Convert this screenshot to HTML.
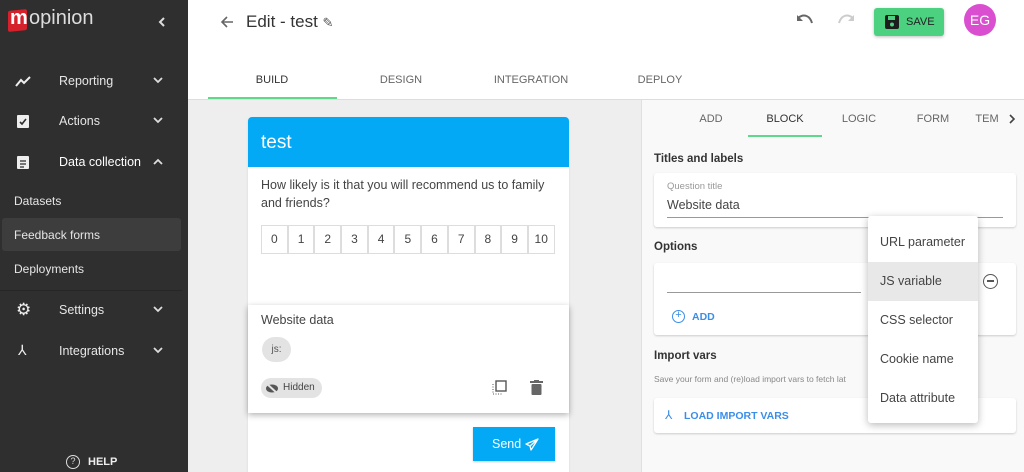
<!DOCTYPE html>
<html><head><meta charset="utf-8"><style>
*{box-sizing:border-box;margin:0;padding:0}
html,body{width:1024px;height:472px;overflow:hidden}
body{font-family:"Liberation Sans",sans-serif;background:#eee;position:relative;color:#333}
.abs{position:absolute}
#side{left:0;top:0;width:188px;height:472px;background:#2f2f2f;color:#eee}
.nav{position:absolute;left:0;width:188px;font-size:12.5px;color:#e6e6e6}
.nav .t{position:absolute;left:59px;top:0}
.nav .ch{position:absolute;left:153px;top:3px}
.sub{position:absolute;left:14px;font-size:12px;color:#e6e6e6}
#hdr{left:188px;top:0;width:836px;height:100px;background:#fff;border-bottom:1px solid #ddd}
.tab{position:absolute;font-size:11px;color:#666;transform:translateX(-50%)}
#rp{left:641px;top:100px;width:383px;height:372px;background:#f9f9f9;border-left:1px solid #e0e0e0}
.card{position:absolute;background:#fff;border-radius:3px;box-shadow:0 1px 2px rgba(0,0,0,.18)}
.lbl{position:absolute;font-size:11.5px;color:#333;font-weight:bold;left:654px}
.cell{float:left;width:26.7px;height:29px;border:1px solid #ddd;text-align:center;line-height:27px;font-size:12px;color:#444}
.dd div{height:39px;line-height:39px;padding-left:12px;font-size:12.5px;color:#444}
</style></head><body>
<div id="side" class="abs">
  <div class="abs" style="left:8px;top:10px;width:19px;height:21px;background:#d4212b;transform:skewY(-6deg);border-radius:2px"></div>
  <div class="abs" style="left:10px;top:7px;font-size:20px;color:#fff;font-weight:bold">m</div>
  <div class="abs" style="left:29px;top:7px;font-size:20px;color:#ddd">opinion</div>
  <svg class="abs" style="left:158px;top:17px" width="8" height="10"><path d="M6 1 L2 5 L6 9" stroke="#ddd" stroke-width="2" fill="none"/></svg>
  <div class="nav" style="top:74px"><svg class="abs" style="left:15px;top:0" width="16" height="14" viewBox="0 0 16 14"><path d="M1 12 L6 6 L9 9 L15 3" stroke="#eee" stroke-width="2" fill="none"/></svg><span class="t">Reporting</span><svg class="ch" width="10" height="7"><path d="M1 1 L5 5 L9 1" stroke="#ddd" stroke-width="1.8" fill="none"/></svg></div>
  <div class="nav" style="top:114px"><svg class="abs" style="left:16px;top:-1px" width="14" height="16"><rect x="1" y="2" width="12" height="13" rx="1" fill="#eee"/><path d="M4 9 L6 11 L10 6" stroke="#2f2f2f" stroke-width="1.6" fill="none"/></svg><span class="t">Actions</span><svg class="ch" width="10" height="7"><path d="M1 1 L5 5 L9 1" stroke="#ddd" stroke-width="1.8" fill="none"/></svg></div>
  <div class="nav" style="top:155px"><svg class="abs" style="left:16px;top:-1px" width="14" height="16"><rect x="1" y="2" width="12" height="13" rx="1" fill="#eee"/><path d="M4 7h6M4 10h6M4 13h4" stroke="#2f2f2f" stroke-width="1.3"/></svg><span class="t" style="color:#fff">Data collection</span><svg class="ch" width="10" height="7"><path d="M1 6 L5 2 L9 6" stroke="#ddd" stroke-width="1.8" fill="none"/></svg></div>
  <div class="sub" style="top:194px">Datasets</div>
  <div class="abs" style="left:2px;top:218px;width:179px;height:33px;background:#3d3d3d;border-radius:3px"></div>
  <div class="sub" style="top:228px">Feedback forms</div>
  <div class="sub" style="top:262px">Deployments</div>
  <div class="abs" style="left:0;top:290px;width:182px;height:1px;background:#262626"></div>
  <div class="nav" style="top:303px"><span class="abs" style="left:16px;top:-3px;font-size:17px;color:#eee">⚙</span><span class="t">Settings</span><svg class="ch" width="10" height="7"><path d="M1 1 L5 5 L9 1" stroke="#ddd" stroke-width="1.8" fill="none"/></svg></div>
  <div class="nav" style="top:344px"><span class="abs" style="left:18px;top:-2px;font-size:14px;color:#eee">⅄</span><span class="t">Integrations</span><svg class="ch" width="10" height="7"><path d="M1 1 L5 5 L9 1" stroke="#ddd" stroke-width="1.8" fill="none"/></svg></div>
  <div class="abs" style="left:66px;top:455px;width:14px;height:14px;border:1.5px solid #ddd;border-radius:50%;font-size:9px;text-align:center;line-height:11px;color:#ddd">?</div>
  <div class="abs" style="left:88px;top:456px;font-size:11px;font-weight:bold;color:#eee">HELP</div>
</div>
<div id="hdr" class="abs">
  <svg class="abs" style="left:32px;top:15px" width="14" height="14"><path d="M13 7H2M7 2 L2 7 L7 12" stroke="#666" stroke-width="1.6" fill="none"/></svg>
  <div class="abs" style="left:58px;top:12px;font-size:17px;color:#333">Edit - test <span style="font-size:13px;color:#555">✎</span></div>
  <div class="tab" style="left:84px;top:74px;color:#333">BUILD</div>
  <div class="abs" style="left:20px;top:97px;width:129px;height:2px;background:#5fd88a"></div>
  <div class="tab" style="left:213px;top:74px">DESIGN</div>
  <div class="tab" style="left:343px;top:74px">INTEGRATION</div>
  <div class="tab" style="left:472px;top:74px">DEPLOY</div>
  <svg class="abs" style="left:608px;top:14px" width="18" height="12"><path d="M2 4 C8 -1 14 2 16 9" stroke="#666" stroke-width="2" fill="none"/><path d="M1 1 V7 H7 Z" fill="#666"/></svg>
  <svg class="abs" style="left:649px;top:14px" width="18" height="12"><path d="M16 4 C10 -1 4 2 2 9" stroke="#ccc" stroke-width="2" fill="none"/><path d="M17 1 V7 H11 Z" fill="#ccc"/></svg>
  <div class="abs" style="left:686px;top:8px;width:70px;height:28px;background:#4cd181;border-radius:3px;box-shadow:0 1px 3px rgba(0,0,0,.25)">
    <svg class="abs" style="left:11px;top:7px" width="14" height="14"><rect x="0" y="0" width="14" height="14" rx="2" fill="#1d1d1d"/><rect x="3" y="1" width="7" height="4" fill="#4cd181"/><circle cx="7" cy="9.5" r="2" fill="#4cd181"/></svg>
    <span class="abs" style="left:32px;top:8px;font-size:11px;color:#222">SAVE</span></div>
  <div class="abs" style="left:776px;top:4px;width:32px;height:32px;border-radius:50%;background:#d94fd0;color:#fff;font-size:14px;text-align:center;line-height:32px">EG</div>
</div>
<div class="abs" style="left:248px;top:117px;width:321px;height:360px;background:#fff;border-radius:4px 4px 0 0;box-shadow:0 1px 2px rgba(0,0,0,.1)">
  <div style="height:50px;background:#03a9f4;border-radius:4px 4px 0 0;color:#fff;font-size:19px;padding:15px 13px">test</div>
  <div class="abs" style="left:13px;top:59px;font-size:12.5px;line-height:18px;color:#444;width:300px">How likely is it that you will recommend us to family and friends?</div>
  <div class="abs" style="left:13px;top:108px;width:294px">
    <div class="cell">0</div><div class="cell">1</div><div class="cell">2</div><div class="cell">3</div><div class="cell">4</div><div class="cell">5</div><div class="cell">6</div><div class="cell">7</div><div class="cell">8</div><div class="cell">9</div><div class="cell">10</div>
  </div>
  <div class="abs" style="left:225px;top:310px;width:82px;height:34px;background:#03a9f4;color:#fff;font-size:12.5px;line-height:34px;padding-left:19px;box-shadow:0 1px 2px rgba(0,0,0,.2)">Send
    <svg class="abs" style="left:52px;top:11px" width="14" height="13"><path d="M13 1 L1 6 L5 8 L6 12 L8 9 Z M5 8 L13 1" stroke="#fff" stroke-width="1.3" fill="none" stroke-linejoin="round"/></svg></div>
</div>
<div class="abs" style="left:248px;top:305px;width:321px;height:108px;background:#fff;box-shadow:0 2px 6px rgba(0,0,0,.3)">
  <div class="abs" style="left:13px;top:8px;font-size:12.5px;color:#444">Website data</div>
  <div class="abs" style="left:14px;top:32px;width:29px;height:25px;border-radius:13px;background:#e3e3e3;font-size:10px;text-align:center;line-height:25px;color:#555">js:</div>
  <div class="abs" style="left:13px;top:73px;width:61px;height:20px;border-radius:10px;background:#e3e3e3;font-size:10px;line-height:20px;color:#444;padding-left:22px">Hidden</div>
  <svg class="abs" style="left:17px;top:78px" width="14" height="11"><ellipse cx="7" cy="5.5" rx="6" ry="4" fill="#555"/><path d="M1 0 L13 11" stroke="#e3e3e3" stroke-width="2"/></svg>
  <svg class="abs" style="left:244px;top:75px" width="15" height="15"><rect x="4" y="1" width="10" height="10" fill="none" stroke="#555" stroke-width="1.4"/><path d="M1 4v10h10" stroke="#555" stroke-dasharray="1 1.5" fill="none"/></svg>
  <svg class="abs" style="left:282px;top:75px" width="13" height="15"><rect x="0" y="1" width="13" height="2" fill="#666"/><rect x="4" y="0" width="5" height="2" fill="#666"/><rect x="1.5" y="4" width="10" height="11" rx="1" fill="#666"/></svg>
</div>
<div id="rp" class="abs"></div>
<div class="tab" style="left:711px;top:113px">ADD</div>
<div class="tab" style="left:785px;top:113px;color:#333">BLOCK</div>
<div class="abs" style="left:748px;top:135px;width:74px;height:2px;background:#5fd88a"></div>
<div class="tab" style="left:859px;top:113px">LOGIC</div>
<div class="tab" style="left:933px;top:113px">FORM</div>
<div class="tab" style="left:987px;top:113px">TEM</div>
<div class="abs" style="left:1000px;top:103px;width:24px;height:32px;background:#f9f9f9"></div>
<svg class="abs" style="left:1009px;top:114px" width="7" height="10"><path d="M1 1 L5 5 L1 9" stroke="#444" stroke-width="1.6" fill="none"/></svg>
<div class="lbl" style="top:153px">Titles and labels</div>
<div class="card" style="left:654px;top:173px;width:362px;height:54px">
  <div class="abs" style="left:13px;top:8px;font-size:9.5px;color:#999">Question title</div>
  <div class="abs" style="left:13px;top:25px;font-size:12.5px;color:#444">Website data</div>
  <div class="abs" style="left:13px;top:44px;width:336px;height:1px;background:#999"></div>
</div>
<div class="lbl" style="top:241px">Options</div>
<div class="card" style="left:654px;top:263px;width:362px;height:72px">
  <div class="abs" style="left:13px;top:29px;width:194px;height:1px;background:#999"></div>
  <div class="abs" style="left:329px;top:11px;width:15px;height:15px;border:1.5px solid #555;border-radius:50%"><div style="margin:5px 3px 0;height:1.5px;background:#555"></div></div>
  <div class="abs" style="left:18px;top:47px;width:13px;height:13px;border:1.5px solid #3b8ee8;border-radius:50%;color:#3b8ee8;font-size:11px;line-height:9px;text-align:center">+</div>
  <div class="abs" style="left:38px;top:48px;font-size:10.5px;font-weight:bold;color:#3b8ee8">ADD</div>
</div>
<div class="lbl" style="top:350px">Import vars</div>
<div class="abs" style="left:654px;top:374px;font-size:8.5px;color:#888">Save your form and (re)load import vars to fetch lat</div>
<div class="card" style="left:654px;top:398px;width:362px;height:35px">
  <div class="abs" style="left:11px;top:10px;font-size:12px;color:#3b8ee8">⅄</div>
  <div class="abs" style="left:30px;top:12px;font-size:10.5px;font-weight:bold;color:#3b8ee8">LOAD IMPORT VARS</div>
</div>
<div class="abs dd" style="left:868px;top:216px;width:110px;height:207px;background:#fff;border-radius:3px;box-shadow:0 2px 8px rgba(0,0,0,.28);padding-top:7px">
  <div>URL parameter</div><div style="background:#e8e8e8">JS variable</div><div>CSS selector</div><div>Cookie name</div><div>Data attribute</div>
</div>
</body></html>
